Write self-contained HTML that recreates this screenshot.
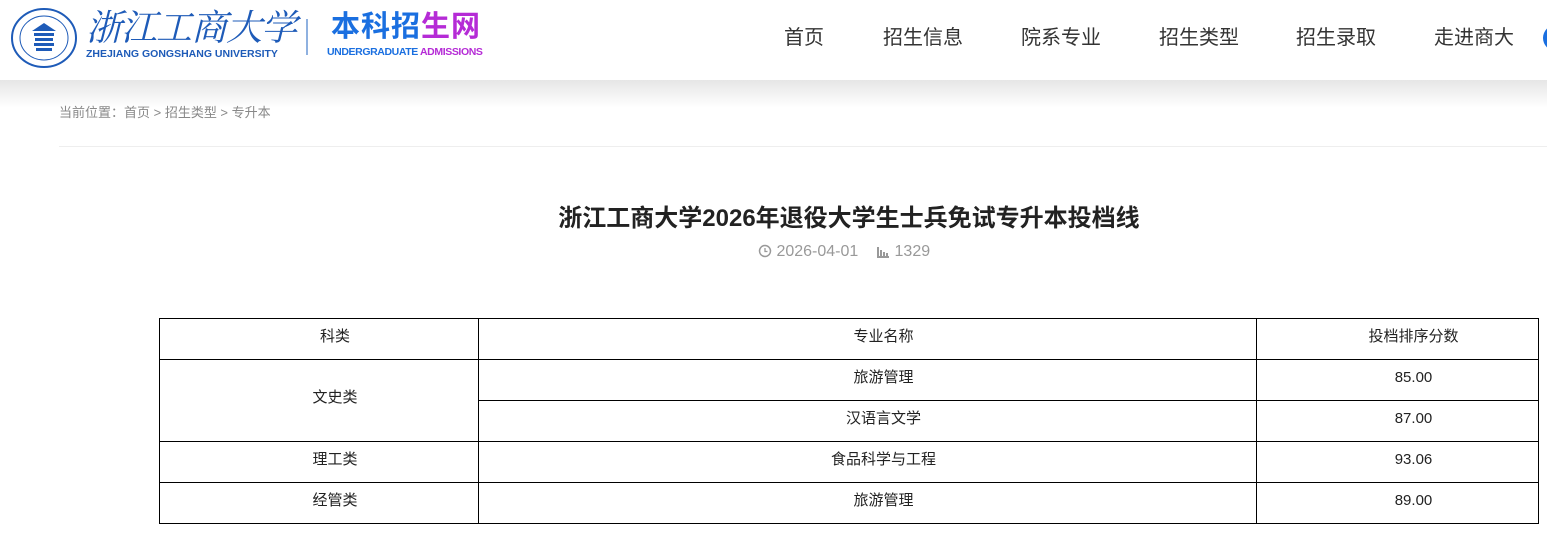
<!DOCTYPE html>
<html><head><meta charset="utf-8"><style>
*{margin:0;padding:0;box-sizing:border-box}
body{width:1547px;height:533px;overflow:hidden;background:#fff;font-family:"Liberation Sans","Noto Sans CJK SC",sans-serif;position:relative}
.hd{position:absolute;left:0;top:0;width:1547px;height:80px;background:#fff}
.shadow{position:absolute;left:0;top:80px;width:1547px;height:28px;background:linear-gradient(#e6e6e6,#fff)}
.nav{position:absolute;top:21px;font-size:20px;color:#333}
.abs{position:absolute}
table{position:absolute;left:159px;top:318px;border-collapse:collapse;font-size:15px;color:#222}
td{border:1px solid #000;text-align:center;height:41px;vertical-align:top;padding:8px 0 0 32px;line-height:20px}
td span{display:inline-block;height:20px;line-height:20px;vertical-align:top}
</style></head><body>
<div class="hd">
<svg class="abs" style="left:10px;top:7px" width="68" height="62"><ellipse cx="34" cy="31" rx="32" ry="29" fill="none" stroke="#1e5bb8" stroke-width="2"/><ellipse cx="34" cy="31" rx="24" ry="22" fill="none" stroke="#1e5bb8" stroke-width="1"/><path d="M34 16 L22 24 H46 Z M24 26h20v3H24z M25 31h18v3H25z M24 36h20v3H24z M26 41h16v3H26z" fill="#1e5bb8"/></svg>
<div class="abs" style="left:86px;top:6px;font-size:36px;color:#1e5bb8;font-family:'Noto Serif CJK SC',serif;font-style:italic;line-height:40px;letter-spacing:-1px">浙江工商大学</div>
<div class="abs" style="left:86px;top:48px;font-size:10.5px;font-weight:bold;color:#1e5bb8;white-space:nowrap">ZHEJIANG GONGSHANG UNIVERSITY</div>
<div class="abs" style="left:306px;top:19px;width:2px;height:36px;background:#8fb1e0"></div>
<div class="abs" style="left:331px;top:9px;font-size:29px;font-weight:bold;line-height:36px;letter-spacing:1px"><span style="color:#1a6fe0">本科招</span><span style="color:#b52bd6">生网</span></div>
<div class="abs" style="left:327px;top:46px;font-size:10.5px;font-weight:bold;letter-spacing:-0.4px;white-space:nowrap"><span style="color:#1a6fe0">UNDERGRADUATE </span><span style="color:#b52bd6">ADMISSIONS</span></div>
<div class="nav" style="left:784px">首页</div>
<div class="nav" style="left:883px">招生信息</div>
<div class="nav" style="left:1021px">院系专业</div>
<div class="nav" style="left:1159px">招生类型</div>
<div class="nav" style="left:1296px">招生录取</div>
<div class="nav" style="left:1434px">走进商大</div>
<div class="abs" style="left:1543px;top:25px;width:26px;height:26px;border-radius:50%;background:#1a6fe0"></div>
</div>
<div class="shadow"></div>
<div class="abs" style="left:59px;top:102px;font-size:13px;color:#888">当前位置：首页 &gt; 招生类型 &gt; 专升本</div>
<div class="abs" style="left:59px;top:146px;width:1488px;height:1px;background:#eee"></div>
<div class="abs" style="left:0;top:198px;width:1698px;text-align:center;font-size:24px;font-weight:bold;color:#222">浙江工商大学2026年退役大学生士兵免试专升本投档线</div>
<div class="abs" style="left:758px;top:243px;font-size:16px;color:#999;white-space:nowrap">
<svg width="14" height="14" style="vertical-align:-2px"><circle cx="7" cy="7" r="5.5" fill="none" stroke="#999" stroke-width="1.5"/><path d="M7 4v3.5h2.5" fill="none" stroke="#999" stroke-width="1.3"/></svg> 2026-04-01 &nbsp;&nbsp;
<svg width="14" height="14" style="vertical-align:-2px"><path d="M1 13h12M2 13V3M5 13V6M8 13V8M11 13V9" stroke="#999" stroke-width="2"/></svg> 1329</div>
<table>
<tr><td style="width:319px"><span>科类</span></td><td style="width:778px"><span>专业名称</span></td><td style="width:282px"><span>投档排序分数</span></td></tr>
<tr><td rowspan="2" style="vertical-align:middle;padding-top:0;padding-bottom:6px"><span>文史类</span></td><td><span>旅游管理</span></td><td><span>85.00</span></td></tr>
<tr><td><span>汉语言文学</span></td><td><span>87.00</span></td></tr>
<tr><td><span>理工类</span></td><td><span>食品科学与工程</span></td><td><span>93.06</span></td></tr>
<tr><td><span>经管类</span></td><td><span>旅游管理</span></td><td><span>89.00</span></td></tr>
</table>
</body></html>
